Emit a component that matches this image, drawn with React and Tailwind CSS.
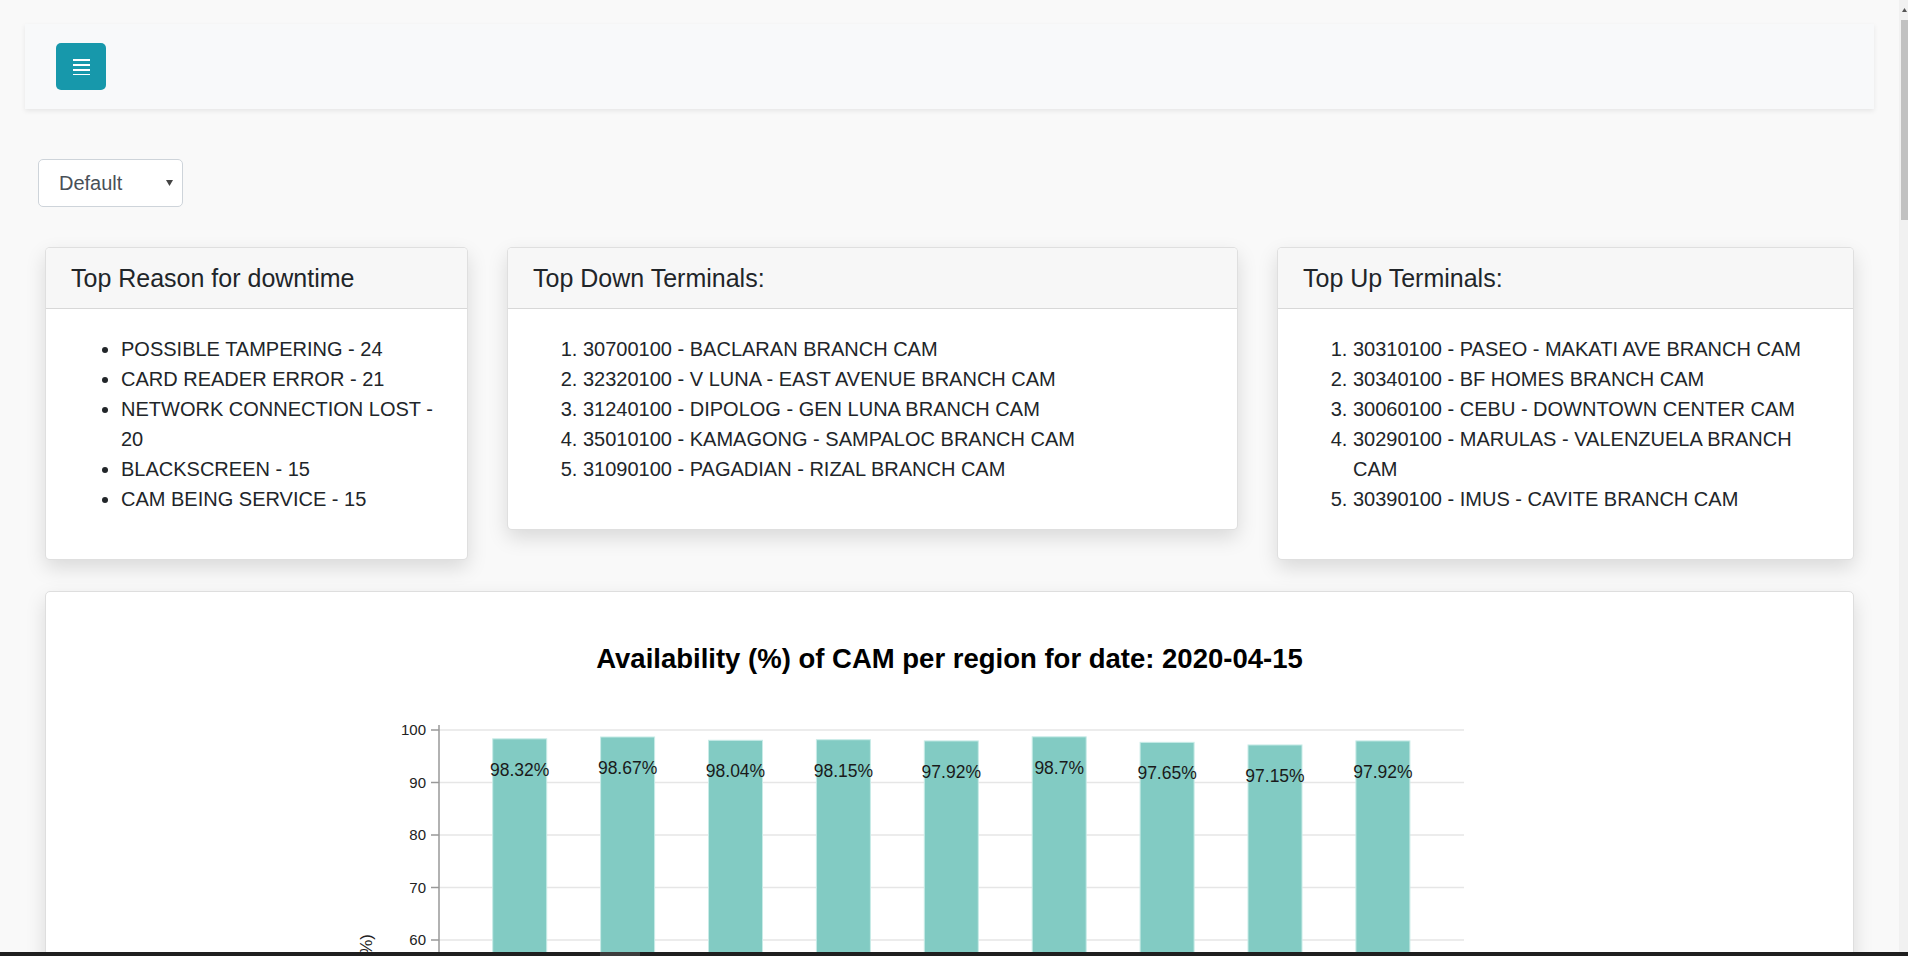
import React from 'react'

const reasons = [
  'POSSIBLE TAMPERING - 24',
  'CARD READER ERROR - 21',
  'NETWORK CONNECTION LOST - 20',
  'BLACKSCREEN - 15',
  'CAM BEING SERVICE - 15',
]

const downTerminals = [
  '30700100 - BACLARAN BRANCH CAM',
  '32320100 - V LUNA - EAST AVENUE BRANCH CAM',
  '31240100 - DIPOLOG - GEN LUNA BRANCH CAM',
  '35010100 - KAMAGONG - SAMPALOC BRANCH CAM',
  '31090100 - PAGADIAN - RIZAL BRANCH CAM',
]

const upTerminals = [
  '30310100 - PASEO - MAKATI AVE BRANCH CAM',
  '30340100 - BF HOMES BRANCH CAM',
  '30060100 - CEBU - DOWNTOWN CENTER CAM',
  '30290100 - MARULAS - VALENZUELA BRANCH CAM',
  '30390100 - IMUS - CAVITE BRANCH CAM',
]

const availability = [98.32, 98.67, 98.04, 98.15, 97.92, 98.7, 97.65, 97.15, 97.92]

function Card({ title, children }) {
  return (
    <div className="bg-white border border-[rgba(0,0,0,0.125)] rounded-[5px] shadow-[0_8px_20px_rgba(0,0,0,0.13)] overflow-hidden">
      <div className="bg-[#f7f7f7] border-b border-[rgba(0,0,0,0.125)] px-[25px] py-[15px] text-[25px] leading-[30px] text-[#212529]">
        {title}
      </div>
      <div className="p-[25px]">{children}</div>
    </div>
  )
}

function Chart() {
  // y: 100 -> 55, 5.25px per unit
  const yOf = (v) => 55 + (100 - v) * 5.25
  const ticks = [100, 90, 80, 70, 60]
  return (
    <svg width="1808" height="277" className="block">
      {ticks.map((t) => (
        <g key={t}>
          <line x1="393" x2="1418" y1={yOf(t)} y2={yOf(t)} stroke="#e6e6e6" strokeWidth="1.5" />
          <line x1="385" x2="393" y1={yOf(t)} y2={yOf(t)} stroke="#999" strokeWidth="1.5" />
          <text x="380" y={yOf(t) + 5} textAnchor="end" fontSize="15" fill="#222" fontFamily="Liberation Sans, Arial, sans-serif">
            {t}
          </text>
        </g>
      ))}
      <line x1="393" x2="393" y1="50" y2="277" stroke="#999" strokeWidth="1.5" />
      {availability.map((v, i) => {
        const x = 446.7 + i * 107.9
        const top = yOf(v)
        return (
          <g key={i}>
            <rect x={x} y={top} width="54" height={300 - top} fill="#82cbc3" stroke="#c8ebe7" strokeWidth="1" />
            <text x={x + 27} y={top + 37} textAnchor="middle" fontSize="17.5" fill="#1a1a1a" fontFamily="Liberation Sans, Arial, sans-serif">
              {v}%
            </text>
          </g>
        )
      })}
      <text
        x="326"
        y="259"
        transform="rotate(-90 326 259)"
        textAnchor="end"
        fontSize="17"
        fill="#222"
        fontFamily="Liberation Sans, Arial, sans-serif"
      >
        Availability (%)
      </text>
    </svg>
  )
}

export default function App() {
  return (
    <div className="w-[1908px] h-[956px] overflow-hidden flex flex-col font-['Liberation_Sans',Arial,sans-serif] text-[#212529]">
      <div className="flex flex-1 min-h-0">
        <main className="w-[1899px] bg-[#f9f9f9] pt-[24px] overflow-hidden">
          {/* top nav */}
          <nav className="mx-[25px] h-[85px] bg-[#f8f9fa] shadow-[0_2px_5px_rgba(0,0,0,0.08)] px-[31px] pt-[19px]">
            <button className="w-[50px] h-[47px] rounded-[5px] bg-[#1798ab] flex items-center justify-center">
              <svg width="17" height="17" viewBox="0 0 17 17">
                <rect x="0" y="1" width="17" height="2" fill="#fff" />
                <rect x="0" y="6" width="17" height="2" fill="#fff" />
                <rect x="0" y="11" width="17" height="2" fill="#fff" />
                <rect x="0" y="16" width="17" height="2" fill="#fff" />
              </svg>
            </button>
          </nav>

          <div className="mt-[50px] ml-[38px] w-[145px] h-[48px] bg-white border border-[#ced4da] rounded-[5px] flex items-center pl-[20px] pr-[9px] text-[20px] text-[#495057]">
            <span className="flex-1">Default</span>
            <svg width="7" height="6" viewBox="0 0 7 6">
              <path d="M0 0 L7 0 L3.5 6 Z" fill="#444" />
            </svg>
          </div>

          <div className="mt-[40px] px-[45px] grid grid-cols-[423px_731px_577px] gap-[39px] items-start text-[20px] leading-[30px]">
            <Card title="Top Reason for downtime">
              <ul className="list-disc pl-[50px] mb-[20px]">
                {reasons.map((r) => (
                  <li key={r}>{r}</li>
                ))}
              </ul>
            </Card>
            <Card title="Top Down Terminals:">
              <ol className="list-decimal pl-[50px] mb-[20px]">
                {downTerminals.map((r) => (
                  <li key={r}>{r}</li>
                ))}
              </ol>
            </Card>
            <Card title="Top Up Terminals:">
              <ol className="list-decimal pl-[50px] mb-[20px]">
                {upTerminals.map((r) => (
                  <li key={r}>{r}</li>
                ))}
              </ol>
            </Card>
          </div>

          <div className="mt-[31px] mx-[45px] h-[600px] bg-white border border-[#dedede] rounded-[5px] shadow-[0_8px_20px_rgba(0,0,0,0.13)] pt-[51px]">
            <h2 className="text-center text-[27.5px] leading-[32px] font-bold text-black">
              Availability (%) of CAM per region for date: 2020-04-15
            </h2>
            <Chart />
          </div>
        </main>

        {/* window scrollbar */}
        <div className="w-[9px] bg-[#f1f1f1] flex flex-col items-end">
          <div className="h-[20px] w-[7px] flex items-center justify-center">
            <svg width="5" height="4" viewBox="0 0 5 4">
              <path d="M0 4 L5 4 L2.5 0 Z" fill="#555" />
            </svg>
          </div>
          <div className="h-[200px] w-[7px] bg-[#c1c1c1]" />
        </div>
      </div>
      <div className="h-[4px] bg-[#1f1f1f] flex">
        <div className="ml-[600px] w-[40px] bg-[#3c3c3c]" />
      </div>
    </div>
  )
}
